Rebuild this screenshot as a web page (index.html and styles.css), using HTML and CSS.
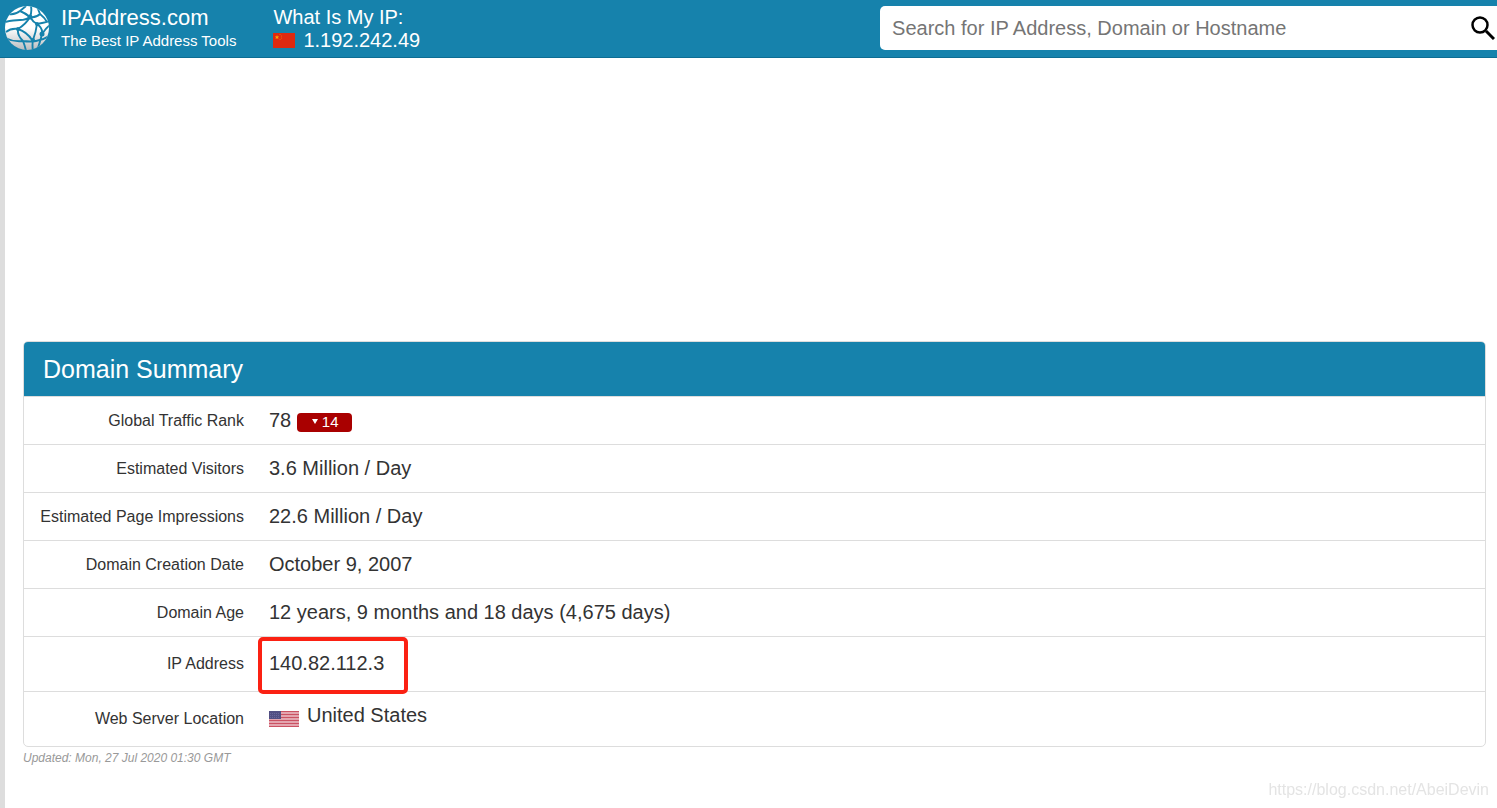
FILE: index.html
```html
<!DOCTYPE html>
<html lang="en">
<head>
<meta charset="utf-8">
<title>IPAddress.com - Domain Summary</title>
<link rel="stylesheet" href="styles.css">
</head>
<body>
<header class="topbar">
  <a class="brand" href="#">
    <svg class="logo" viewBox="0 0 44 44" aria-hidden="true">
      <defs>
        <linearGradient id="shade" x1="0" y1="0" x2="0" y2="1">
          <stop offset=".5" stop-color="#fff"/>
          <stop offset="1" stop-color="#b9bcbf"/>
        </linearGradient>
        <clipPath id="globe"><circle cx="22" cy="22" r="22"/></clipPath>
      </defs>
      <circle cx="22" cy="22" r="22" fill="url(#shade)"/>
      <g clip-path="url(#globe)" fill="none" stroke="#1682ac" stroke-width="1.900">
        <path d="M4 8Q10 9 15 5L21 0M15 5Q20 7 25 11M25 11Q27 6 26 0M25 11Q31 12 35 8M35 8L33 3M35 8Q40 12 42 16M0 16Q9 14 15 14Q21 14 25 11M25 11Q28 16 32 18M32 18Q39 17 45 15M25 11Q21 18 13 23M1 26Q6 22 13 23M13 23Q22 26 27 34M32 18Q31 26 28 34M32 18Q38 22 37 28M37 28Q41 22 45 19M13 23Q12 29 18 35M37 28Q35 36 33 42M0 32Q8 36 18 35Q25 36 31 35Q38 34 44 30M18 35Q20 40 21 45M28 34Q27 39 28 45"/>
        <g fill="#1682ac" stroke="none"><circle cx="25" cy="11" r="2.500"/><circle cx="13" cy="23" r="2"/><circle cx="28" cy="34" r="2"/><circle cx="32" cy="18" r="2"/><circle cx="37" cy="28" r="2.500"/></g>
      </g>
    </svg>
    <span class="brand-text">
      <span class="brand-name">IPAddress.com</span>
      <span class="tagline">The Best IP Address Tools</span>
    </span>
  </a>
  <div class="my-ip">
    <span>What Is My IP:</span>
    <span class="my-ip-value">
      <svg class="flag-cn" viewBox="0 0 22 15" role="img" aria-label="China">
        <path fill="#de2910" d="M0 0h22v15H0z"/>
        <path fill="#f5a80e" d="M4 2l.6 1.500h1.600L5 4.500l.5 1.600L4 5.200 2.500 6.100 3 4.500 1.800 3.500h1.600z"/>
        <g fill="#e8700f"><circle cx="7" cy="1.500" r=".6"/><circle cx="8.500" cy="3" r=".6"/><circle cx="8.500" cy="5" r=".6"/><circle cx="7" cy="6.500" r=".6"/></g>
      </svg>
      <span>1.192.242.49</span>
    </span>
  </div>
  <form class="search" role="search">
    <input class="search-input" type="text" aria-label="Search" placeholder="Search for IP Address, Domain or Hostname">
    <button class="search-button" type="button" aria-label="Search">
      <svg class="search-icon" viewBox="0 0 24 24" aria-hidden="true"><g fill="none" stroke="#000"><circle cx="9" cy="9" r="7.500" stroke-width="2.500"/><path stroke-width="3" d="M15 15l8 8"/></g></svg>
    </button>
  </form>
</header>
<main class="page">
  <section class="panel">
    <h1 class="panel-title">Domain Summary</h1>
    <table class="summary">
      <tbody>
      <tr><th scope="row">Global Traffic Rank</th><td>78 <span class="rank"><svg class="down" viewBox="0 0 6 5" aria-hidden="true"><path fill="#fff" d="M0 0h6L3 5z"/></svg>14</span></td></tr>
      <tr><th scope="row">Estimated Visitors</th><td>3.6 Million / Day</td></tr>
      <tr><th scope="row">Estimated Page Impressions</th><td>22.6 Million / Day</td></tr>
      <tr><th scope="row">Domain Creation Date</th><td>October 9, 2007</td></tr>
      <tr><th scope="row">Domain Age</th><td>12 years, 9 months and 18 days (4,675 days)</td></tr>
      <tr class="tall"><th scope="row">IP Address</th><td><span class="marked">140.82.112.3</span></td></tr>
      <tr class="tall"><th scope="row">Web Server Location</th><td class="location"><svg class="flag-us" viewBox="0 0 30 16" role="img" aria-label="United States">
        <path fill="#e3a5af" d="M0 0h30v16H0z"/>
        <path stroke="#cb5263" d="M0 .5h30M0 3.500h30M0 6.500h30M0 9.500h30M0 12.500h30M0 15.500h30"/>
        <path fill="#514f83" d="M0 0h12v8H0z"/>
        <path stroke="#69669a" stroke-dasharray="1 1" d="M1 2.500h10M1 4.500h10M1 6.500h10"/>
      </svg>United States</td></tr>
      </tbody>
    </table>
  </section>
  <p class="updated">Updated: Mon, 27 Jul 2020 01:30 GMT</p>
</main>
<div class="watermark">https://blog.csdn.net/AbeiDevin</div>
</body>
</html>
```
FILE: styles.css
```css
* {
  box-sizing: border-box;
}

body {
  margin: 0;
  min-height: 100vh;
  display: flex;
  flex-direction: column;
  background: #fff;
  color: #333;
  font: 20px/24px "Liberation Sans", Arial, sans-serif;
}

.topbar {
  display: flex;
  align-items: flex-start;
  padding: 6px 0 5px 5px;
  background: #1682ac;
  border-bottom: 1px solid #0d6d93;
  color: #fff;
}

.brand {
  display: flex;
  gap: 12px;
  color: inherit;
  text-decoration: none;
}

.logo {
  width: 44px;
  height: 44px;
}

.brand-text,
.my-ip {
  display: flex;
  flex-direction: column;
}

.brand-name {
  font-size: 22px;
}

.tagline {
  font-size: 15px;
  line-height: 22px;
}

.my-ip {
  margin-left: 37px;
  line-height: 23px;
}

.my-ip-value {
  display: flex;
  align-items: center;
  gap: 8px;
}

.flag-cn {
  width: 22px;
  height: 15px;
}

.search {
  display: flex;
  width: 41.35%;
  height: 44px;
  margin-left: auto;
  background: #fff;
  border-radius: 5px 0 0 5px;
}

.search-input {
  flex: 1;
  min-width: 0;
  padding: 0 12px;
  border: 0;
  background: none;
  color: #333;
  font: inherit;
}

.search-input::placeholder {
  color: #757575;
  opacity: 1;
}

.search-button {
  display: flex;
  align-items: center;
  padding: 0 2px;
  border: 0;
  background: none;
}

.search-icon {
  width: 24px;
  height: 24px;
}

.page {
  flex: 1;
  padding: 283px 11px 32px 18px;
  border-left: 5px solid #ddd;
}

.panel {
  border: 1px solid #ddd;
  border-radius: 5px;
  overflow: hidden;
}

.panel-title {
  margin: 0;
  padding: 12px 19px;
  background: #1682ac;
  color: #fff;
  font-size: 25px;
  font-weight: 400;
  line-height: 30px;
}

.summary {
  width: 100%;
  border-spacing: 0;
}

.summary th,
.summary td {
  height: 48px;
  padding: 0 12px;
  border-top: 1px solid #ddd;
  vertical-align: middle;
}

.summary td {
  padding: 0 13px 2px;
}

.summary th {
  width: 232px;
  font-size: 16px;
  font-weight: 400;
  text-align: right;
  white-space: nowrap;
}

.summary .tall th,
.summary .tall td {
  height: 55px;
}

.summary .location {
  padding-bottom: 8px;
}

.rank {
  display: inline-block;
  padding: 0 13px 1px 15px;
  border-radius: 4px;
  background: #a90000;
  color: #fff;
  font-size: 15px;
  line-height: 18px;
}

.down {
  width: 6px;
  height: 5px;
  margin-right: 4px;
  vertical-align: 3px;
}

.marked {
  position: relative;
}

.marked::after {
  content: "";
  position: absolute;
  inset: -15px -24px -20px -11px;
  border: 4px solid #fb2113;
  border-radius: 5px;
}

.flag-us {
  width: 30px;
  height: 16px;
  margin-right: 8px;
  vertical-align: -5px;
}

.updated {
  margin: 0;
  color: #999;
  font-size: 12px;
  font-style: italic;
  line-height: 22px;
}

.watermark {
  position: fixed;
  right: 8px;
  bottom: 6px;
  color: #e4e4e4;
  font-size: 16px;
}
```
